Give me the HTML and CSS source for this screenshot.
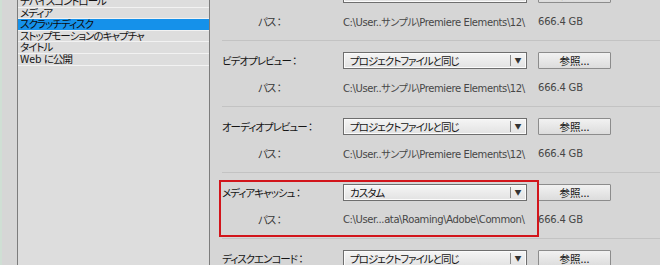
FILE: index.html
```html
<!DOCTYPE html>
<html lang="ja">
<head>
<meta charset="utf-8">
<link rel="stylesheet" href="styles.css">
</head>
<body>
<div class="app">
  <div class="gutter"></div>
  <ul class="list">
    <li class="item">デバイスコントロール</li>
    <li class="item">メディア</li>
    <li class="item selected">スクラッチディスク</li>
    <li class="item">ストップモーションのキャプチャ</li>
    <li class="item">タイトル</li>
    <li class="item"><span class="latin">Web </span>に公開</li>
  </ul>
  <div class="panel">
    <section class="group">
      <div class="row">
        <span class="label">キャプチャしたビデオ ：</span>
        <div class="select"><span class="value">プロジェクトファイルと同じ</span><span class="arrow">▼</span></div>
        <button class="btn">参照...</button>
      </div>
      <div class="path-row">
        <span class="path-label">パス ：</span>
        <span class="path">C:\User..サンプル\Premiere Elements\12\</span>
        <span class="size">666.4 GB</span>
      </div>
    </section>
    <section class="group">
      <div class="row">
        <span class="label">ビデオプレビュー ：</span>
        <div class="select"><span class="value">プロジェクトファイルと同じ</span><span class="arrow">▼</span></div>
        <button class="btn">参照...</button>
      </div>
      <div class="path-row">
        <span class="path-label">パス ：</span>
        <span class="path">C:\User..サンプル\Premiere Elements\12\</span>
        <span class="size">666.4 GB</span>
      </div>
    </section>
    <section class="group">
      <div class="row">
        <span class="label">オーディオプレビュー ：</span>
        <div class="select"><span class="value">プロジェクトファイルと同じ</span><span class="arrow">▼</span></div>
        <button class="btn">参照...</button>
      </div>
      <div class="path-row">
        <span class="path-label">パス ：</span>
        <span class="path">C:\User..サンプル\Premiere Elements\12\</span>
        <span class="size">666.4 GB</span>
      </div>
    </section>
    <section class="group">
      <div class="row">
        <span class="label">メディアキャッシュ ：</span>
        <div class="select"><span class="value">カスタム</span><span class="arrow">▼</span></div>
        <button class="btn">参照...</button>
      </div>
      <div class="path-row">
        <span class="path-label">パス ：</span>
        <span class="path">C:\User...ata\Roaming\Adobe\Common\</span>
        <span class="size">666.4 GB</span>
      </div>
      <div class="mark"></div>
    </section>
    <section class="group">
      <div class="row">
        <span class="label">ディスクエンコード ：</span>
        <div class="select"><span class="value">プロジェクトファイルと同じ</span><span class="arrow">▼</span></div>
        <button class="btn">参照...</button>
      </div>
    </section>
  </div>
</div>
</body>
</html>
```
FILE: styles.css
```css
* { box-sizing: border-box; }
html, body {
  margin: 0;
  padding: 0;
}
body {
  width: 660px;
  height: 265px;
  overflow: hidden;
  background: #d6d6d6;
  font-family: "Noto Sans CJK JP", "Liberation Sans", sans-serif;
  font-size: 10.5px;
  letter-spacing: -1px;
  font-feature-settings: "palt";
  color: #141414;
}
.app {
  display: flex;
  height: 265px;
}
.gutter {
  width: 17px;
  flex: none;
  border-left: 2px solid #cfdfd4;
  background: #d6d6d6;
}
.list {
  width: 193px;
  flex: none;
  margin: 0;
  padding: 0;
  list-style: none;
  background: #dddddd;
  border-left: 1px solid #7c7c7c;
  border-right: 1px solid #7c7c7c;
  overflow: hidden;
}
.item {
  height: 11.6px;
  line-height: 10.6px;
  padding-left: 2px;
  border-bottom: 1px solid #f2f2f2;
  white-space: nowrap;
  overflow: hidden;
}
.item:first-child {
  margin-top: -4px;
}
.item.selected {
  background: #1591ea;
  color: #0c0c0c;
}
.latin {
  letter-spacing: 0;
}
.panel {
  flex: 1;
  padding-left: 12px;
  margin-top: -26px;
}
.group {
  position: relative;
  height: 66px;
  border-top: 1px solid #c3c3c3;
  padding-top: 11px;
}
.row {
  display: flex;
  align-items: center;
  height: 17px;
}
.label {
  width: 121px;
  flex: none;
  white-space: nowrap;
}
.select {
  width: 184px;
  height: 17px;
  flex: none;
  display: flex;
  align-items: center;
  border: 1px solid #6e6e6e;
  background: linear-gradient(#f5f5f5, #e2e2e2);
  box-shadow: inset 0 0 0 1px #fbfbfb;
}
.value {
  flex: 1;
  padding-left: 6px;
  white-space: nowrap;
  line-height: 15px;
}
.arrow {
  width: 15px;
  height: 11px;
  border-left: 1px solid #8a8a8a;
  font-size: 7px;
  letter-spacing: 0;
  line-height: 11px;
  text-align: center;
  color: #333;
  margin-right: 1px;
}
.btn {
  width: 73px;
  height: 17px;
  margin-left: 11px;
  padding: 0;
  border: 1px solid #8c8c8c;
  border-radius: 1px;
  background: linear-gradient(#f2f2f2, #dcdcdc);
  font: inherit;
  letter-spacing: 0;
  color: #141414;
  line-height: 15px;
}
.path-row {
  display: flex;
  align-items: center;
  height: 14px;
  margin-top: 11px;
  color: #464646;
  white-space: nowrap;
}
.path-label {
  width: 121px;
  flex: none;
  padding-left: 36px;
  color: #363636;
}
.path {
  width: 195px;
  flex: none;
  font-family: "DejaVu Sans", "Noto Sans CJK JP", sans-serif;
  font-size: 10px;
  letter-spacing: -0.4px;
}
.size {
  font-family: "DejaVu Sans", sans-serif;
  font-size: 10px;
  letter-spacing: -0.2px;
}
.mark {
  position: absolute;
  left: -3px;
  top: 7px;
  width: 320px;
  height: 57px;
  border: 2px solid #d2151b;
}
```
